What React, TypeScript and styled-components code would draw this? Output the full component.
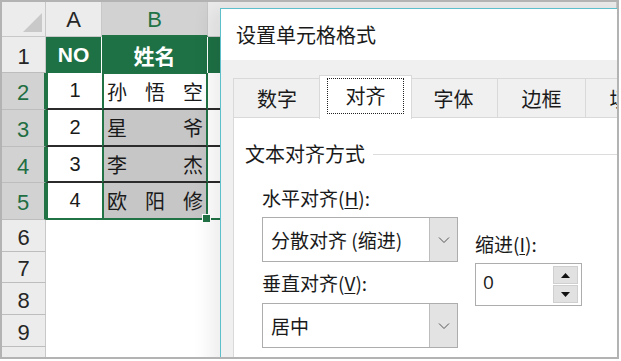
import * as React from 'react'
import styled, { createGlobalStyle } from 'styled-components'

const GlobalStyle = createGlobalStyle`
  html, body {
    margin: 0;
    padding: 0;
    background: #ffffff;
  }
  body {
    font-family: "Noto Sans CJK SC", "Liberation Sans", sans-serif;
  }
`

const GREEN = '#217346'
const CJK = `"Noto Sans CJK SC", sans-serif`
const LATIN = `"Liberation Sans", "Noto Sans CJK SC", sans-serif`

const Frame = styled.div`
  position: relative;
  width: 619px;
  height: 359px;
  border: 2px solid #b3b3b3;
  box-sizing: border-box;
  overflow: hidden;
  background: #ffffff;
`

const Sheet = styled.div`
  display: grid;
  grid-template-columns: 44px 56px 106px 1fr;
  grid-template-rows: 35px 36px 37px 37px 36px 37px 32px 31px 32px 32px 32px;
  height: 100%;
`

const Corner = styled.div`
  position: relative;
  background: #ececec;
  border-right: 1px solid #c8c8c8;
  border-bottom: 1px solid #c8c8c8;

  &::after {
    content: '';
    position: absolute;
    right: 3px;
    bottom: 4px;
    border-style: solid;
    border-width: 0 0 19px 19px;
    border-color: transparent transparent #c9c9c9 transparent;
  }
`

const ColHead = styled.div<{ $active?: boolean }>`
  display: flex;
  align-items: center;
  justify-content: center;
  font-family: ${LATIN};
  font-size: 22px;
  color: ${(p) => (p.$active ? GREEN : '#262626')};
  background: ${(p) => (p.$active ? '#d2d2d2' : '#ececec')};
  border-right: 1px solid #c8c8c8;
  border-bottom: ${(p) => (p.$active ? `2px solid ${GREEN}` : '1px solid #c8c8c8')};
  box-sizing: border-box;
  padding-top: 2px;
`

const RowHead = styled.div<{ $active?: boolean }>`
  display: flex;
  align-items: center;
  justify-content: center;
  font-family: ${LATIN};
  font-size: 22px;
  color: ${(p) => (p.$active ? '#1f6e43' : '#262626')};
  background: ${(p) => (p.$active ? '#d2d2d2' : '#ececec')};
  border-right: ${(p) => (p.$active ? `2px solid ${GREEN}` : '1px solid #c8c8c8')};
  border-bottom: 1px solid #bdbdbd;
  box-sizing: border-box;
  padding-top: 4px;
`

const HeadCell = styled.div`
  display: flex;
  align-items: center;
  justify-content: center;
  background: #1e7145;
  color: #ffffff;
  font-family: ${LATIN};
  font-weight: bold;
  font-size: 21px;
  border-right: 1px solid #ffffff;
  box-sizing: border-box;
`

const NumCell = styled.div<{ $last?: boolean }>`
  display: flex;
  align-items: center;
  justify-content: center;
  font-family: ${LATIN};
  font-size: 20px;
  color: #1a1a1a;
  border-left: 2px solid ${GREEN};
  border-bottom: 2px solid ${(p) => (p.$last ? GREEN : '#2b2b2b')};
  box-sizing: border-box;
`

const NameCell = styled.div<{ $shade?: boolean; $last?: boolean; $first?: boolean }>`
  position: relative;
  display: flex;
  align-items: center;
  justify-content: space-between;
  padding: 0 3px 0 3px;
  font-family: ${CJK};
  font-size: 20px;
  color: #1a1a1a;
  background: ${(p) => (p.$shade ? '#c6c6c6' : '#ffffff')};
  border-left: 2px solid ${GREEN};
  border-right: 2px solid ${GREEN};
  border-top: ${(p) => (p.$first ? `1px solid ${GREEN}` : 'none')};
  border-bottom: 2px solid ${(p) => (p.$last ? GREEN : '#2b2b2b')};
  box-sizing: border-box;
`

const FillHandle = styled.span`
  position: absolute;
  right: -5px;
  bottom: -5px;
  width: 7px;
  height: 7px;
  background: ${GREEN};
  border: 1px solid #ffffff;
`

const SideCell = styled.div<{ $line?: string }>`
  background: #ffffff;
  border-bottom: ${(p) => (p.$line ? `2px solid ${p.$line}` : 'none')};
  box-sizing: border-box;
`

const HeadSide = styled.div`
  background: #1e7145;
`

const Dialog = styled.div`
  position: absolute;
  left: 218px;
  top: 6px;
  width: 410px;
  height: 370px;
  border: 1px solid #5cbfc9;
  background: #f0f0f0;
  display: flex;
  flex-direction: column;
  box-shadow: -10px 0 18px rgba(0, 0, 0, 0.07);
`

const TitleBar = styled.div`
  height: 51px;
  background: #ffffff;
  display: flex;
  align-items: center;
  padding-left: 15px;
  font-family: ${CJK};
  font-size: 20px;
  color: #1a1a1a;
`

const Body = styled.div`
  flex: 1;
  padding: 18px 0 0 12px;
  display: flex;
  flex-direction: column;
`

const TabStrip = styled.div`
  display: flex;
  height: 40px;
  align-items: flex-end;
  position: relative;
  z-index: 1;
`

const Tab = styled.div<{ $active?: boolean }>`
  flex-shrink: 0;
  width: ${(p) => (p.$active ? '93px' : '88px')};
  height: ${(p) => (p.$active ? '44px' : '40px')};
  margin: ${(p) => (p.$active ? '0 -2px -1px -2px' : '0')};
  display: flex;
  align-items: center;
  justify-content: center;
  box-sizing: border-box;
  background: ${(p) => (p.$active ? '#ffffff' : '#f0f0f0')};
  border: 1px solid #d9d9d9;
  border-bottom: ${(p) => (p.$active ? 'none' : '1px solid #d9d9d9')};
  border-left: ${(p) => (p.$active ? '1px solid #d9d9d9' : 'none')};
  font-family: ${CJK};
  font-size: 20px;
  color: #1a1a1a;
  position: relative;
  z-index: ${(p) => (p.$active ? 2 : 1)};

  &:first-child {
    border-left: 1px solid #d9d9d9;
  }
`

const Focus = styled.span`
  display: flex;
  align-items: center;
  justify-content: center;
  width: 77px;
  height: 36px;
  border: 1px dotted #222;
  box-sizing: border-box;
  margin-bottom: 4px;
`

const Pane = styled.div`
  flex: 1;
  background: #ffffff;
  border: 1px solid #d9d9d9;
  margin-top: -1px;
  padding: 24px 0 0 11px;
`

const SectionHead = styled.div`
  display: flex;
  align-items: center;
  font-family: ${CJK};
  font-size: 20px;
  line-height: 24px;
  color: #1a1a1a;

  &::after {
    content: '';
    flex: 1;
    height: 1px;
    margin-left: 8px;
    margin-top: 1px;
    background: #dcdcdc;
  }
`

const Form = styled.div`
  display: flex;
  gap: 17px;
  padding: 20px 0 0 17px;
`

const Column = styled.div<{ $offset?: number }>`
  display: flex;
  flex-direction: column;
  padding-top: ${(p) => p.$offset || 0}px;
`

const Label = styled.div<{ $gap?: number }>`
  font-family: ${CJK};
  font-size: 19px;
  line-height: 24px;
  color: #1a1a1a;
  margin-bottom: ${(p) => p.$gap || 7}px;

  u {
    text-underline-offset: 2px;
  }
`

const Combo = styled.div`
  display: flex;
  width: 196px;
  height: 45px;
  border: 1px solid #adadad;
  box-sizing: border-box;
  background: #ffffff;
  margin-bottom: 9px;
`

const ComboText = styled.div`
  flex: 1;
  display: flex;
  align-items: center;
  padding-left: 8px;
  font-family: ${CJK};
  font-size: 19px;
  color: #1a1a1a;
`

const ComboButton = styled.div`
  width: 27px;
  display: flex;
  align-items: center;
  justify-content: center;
  background: #e3e3e3;
  border-left: 1px solid #bdbdbd;
`

const Spin = styled.div`
  display: flex;
  width: 107px;
  height: 43px;
  border: 1px solid #adadad;
  box-sizing: border-box;
  background: #ffffff;
  padding: 2px 3px 2px 0;
`

const SpinValue = styled.div`
  flex: 1;
  padding-left: 7px;
  font-family: "Open Sans", ${LATIN};
  font-size: 19px;
  line-height: 32px;
  color: #1a1a1a;
`

const SpinButtons = styled.div`
  width: 25px;
  display: flex;
  flex-direction: column;
  gap: 1px;
`

const SpinButton = styled.div`
  flex: 1;
  display: flex;
  align-items: center;
  justify-content: center;
  background: #e1e1e1;
  border: 1px solid #cfcfcf;
`

const Chevron = () => (
  <svg width="12" height="8" viewBox="0 0 12 8">
    <polyline points="1,1.5 6,6.5 11,1.5" fill="none" stroke="#555" strokeWidth="1" />
  </svg>
)

const Arrow = ({ up }: { up?: boolean }) => (
  <svg width="9" height="5" viewBox="0 0 9 5">
    <polygon points={up ? '0,5 9,5 4.5,0' : '0,0 9,0 4.5,5'} fill="#111" />
  </svg>
)

const names = [
  ['孙', '悟', '空'],
  ['星', '爷'],
  ['李', '杰'],
  ['欧', '阳', '修'],
]

export default function App() {
  return (
    <>
      <GlobalStyle />
      <Frame>
        <Sheet>
          <Corner />
          <ColHead>A</ColHead>
          <ColHead $active>B</ColHead>
          <ColHead />

          <RowHead>1</RowHead>
          <HeadCell>NO</HeadCell>
          <HeadCell>姓名</HeadCell>
          <HeadSide />

          {names.map((chars, i) => (
            <React.Fragment key={i}>
              <RowHead $active>{i + 2}</RowHead>
              <NumCell $last={i === 3}>{i + 1}</NumCell>
              <NameCell $shade={i > 0} $first={i === 0} $last={i === 3}>
                {chars.map((c) => (
                  <span key={c}>{c}</span>
                ))}
                {i === 3 && <FillHandle />}
              </NameCell>
              <SideCell $line={i === 3 ? GREEN : '#2b2b2b'} />
            </React.Fragment>
          ))}

          {[6, 7, 8, 9, 10].map((n) => (
            <React.Fragment key={n}>
              <RowHead>{n}</RowHead>
              <SideCell />
              <SideCell />
              <SideCell />
            </React.Fragment>
          ))}
        </Sheet>

        <Dialog>
          <TitleBar>设置单元格格式</TitleBar>
          <Body>
            <TabStrip>
              <Tab>数字</Tab>
              <Tab $active>
                <Focus>对齐</Focus>
              </Tab>
              <Tab>字体</Tab>
              <Tab>边框</Tab>
              <Tab>填充</Tab>
            </TabStrip>
            <Pane>
              <SectionHead>文本对齐方式</SectionHead>
              <Form>
                <Column>
                  <Label>
                    水平对齐(<u>H</u>):
                  </Label>
                  <Combo>
                    <ComboText>分散对齐 (缩进)</ComboText>
                    <ComboButton>
                      <Chevron />
                    </ComboButton>
                  </Combo>
                  <Label $gap={8}>
                    垂直对齐(<u>V</u>):
                  </Label>
                  <Combo>
                    <ComboText>居中</ComboText>
                    <ComboButton>
                      <Chevron />
                    </ComboButton>
                  </Combo>
                </Column>
                <Column $offset={46}>
                  <Label $gap={7}>
                    缩进(<u>I</u>):
                  </Label>
                  <Spin>
                    <SpinValue>0</SpinValue>
                    <SpinButtons>
                      <SpinButton>
                        <Arrow up />
                      </SpinButton>
                      <SpinButton>
                        <Arrow />
                      </SpinButton>
                    </SpinButtons>
                  </Spin>
                </Column>
              </Form>
            </Pane>
          </Body>
        </Dialog>
      </Frame>
    </>
  )
}
